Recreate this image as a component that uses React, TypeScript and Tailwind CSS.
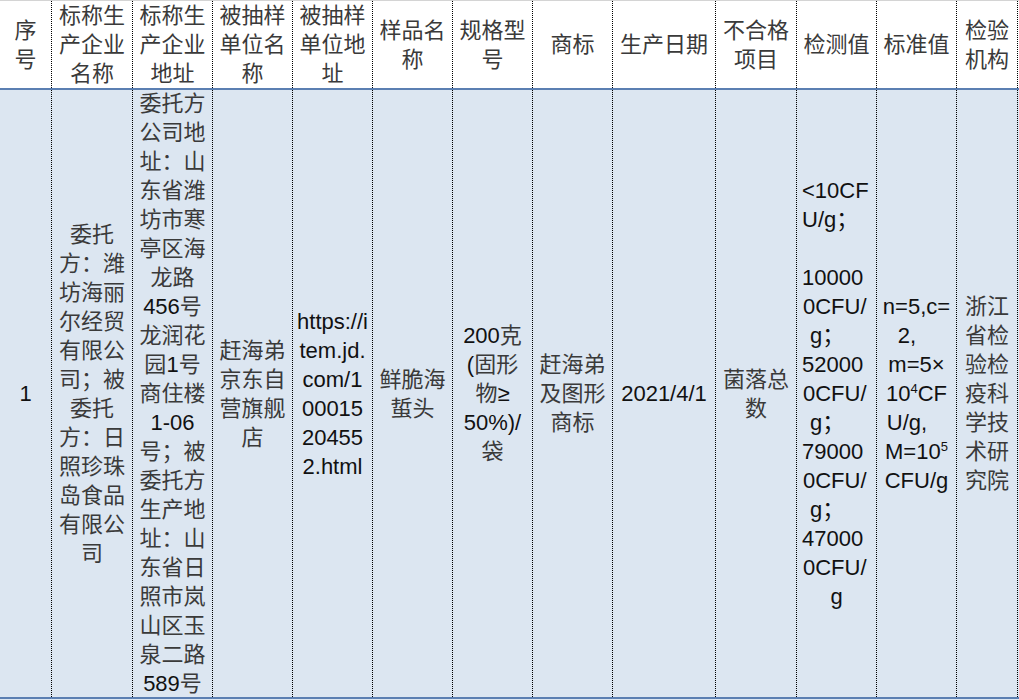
import React from "react";

type Line = { t: React.ReactNode; c?: string };

const cols = [
  "w-[52px]",
  "w-[81px]",
  "w-[80px]",
  "w-[80px]",
  "w-[80px]",
  "w-[80px]",
  "w-[80px]",
  "w-[80px]",
  "w-[103px]",
  "w-[81px]",
  "w-[80px]",
  "w-[80px]",
  "w-[61px]",
];

const cjk = (s: string): React.ReactNode => {
  const parts = s.split(/([\u3000-\u9fff\uff00-\uffef]+)/);
  return parts.map((p, i) =>
    /[\u3000-\u9fff\uff00-\uffef]/.test(p) ? (
      <span key={i} className="text-[#3a3a3a]">
        {p}
      </span>
    ) : (
      <React.Fragment key={i}>{p}</React.Fragment>
    )
  );
};

const header: string[][] = [
  ["序", "号"],
  ["标称生", "产企业", "名称"],
  ["标称生", "产企业", "地址"],
  ["被抽样", "单位名", "称"],
  ["被抽样", "单位地", "址"],
  ["样品名", "称"],
  ["规格型", "号"],
  ["商标"],
  ["生产日期"],
  ["不合格", "项目"],
  ["检测值"],
  ["标准值"],
  ["检验", "机构"],
];

const L = (arr: (string | Line)[]): Line[] =>
  arr.map((x) => (typeof x === "string" ? { t: cjk(x) } : x));

const sup = (n: string) => (
  <span className="text-[13px] leading-none align-super">{n}</span>
);

const body: Line[][] = [
  L(["1"]),
  L([
    "委托",
    "方：潍",
    "坊海丽",
    "尔经贸",
    "有限公",
    "司；被",
    "委托",
    "方：日",
    "照珍珠",
    "岛食品",
    "有限公",
    "司",
  ]),
  L([
    "委托方",
    "公司地",
    "址：山",
    "东省潍",
    "坊市寒",
    "亭区海",
    "龙路",
    "456号",
    "龙润花",
    "园1号",
    "商住楼",
    "1-06",
    "号；被",
    "委托方",
    "生产地",
    "址：山",
    "东省日",
    "照市岚",
    "山区玉",
    "泉二路",
    "589号",
  ]),
  L(["赶海弟", "京东自", "营旗舰", "店"]),
  L(["https://i", "tem.jd.", "com/1", "00015", "20455", "2.html"]),
  L(["鲜脆海", "蜇头"]),
  L(["200克", "(固形", "物≥", "50%)/", "袋"]),
  L(["赶海弟", "及图形", "商标"]),
  L(["2021/4/1"]),
  L(["菌落总", "数"]),
  [
    { t: "<10CF", c: "self-start pl-[5px]" },
    { t: "U/g；", c: "self-start pl-[5px]" },
    { t: "\u00a0", c: "self-start pl-[5px]" },
    { t: "10000", c: "self-start pl-[5px]" },
    { t: "0CFU/", c: "self-start pl-[6px]" },
    { t: "g；", c: "self-start pl-[13px]" },
    { t: "52000", c: "self-start pl-[5px]" },
    { t: "0CFU/", c: "self-start pl-[6px]" },
    { t: "g；", c: "self-start pl-[13px]" },
    { t: "79000", c: "self-start pl-[5px]" },
    { t: "0CFU/", c: "self-start pl-[6px]" },
    { t: "g；", c: "self-start pl-[13px]" },
    { t: "47000", c: "self-start pl-[5px]" },
    { t: "0CFU/", c: "self-start pl-[6px]" },
    { t: "g" },
  ],
  [
    { t: "n=5,c=" },
    { t: "2,", c: "pr-[19px]" },
    { t: "m=5×" },
    { t: <>10{sup("4")}CF</> },
    { t: "U/g,", c: "pr-[19px]" },
    { t: <>M=10{sup("5")}</> },
    { t: "CFU/g" },
  ],
  L(["浙江", "省检", "验检", "疫科", "学技", "术研", "究院"]),
];

export default function App() {
  return (
    <div
      className="w-[1019px] h-[700px] bg-white text-[22px] leading-[29px] text-[#111111] overflow-hidden"
      style={{
        fontFamily:
          '"Liberation Sans", "Noto Sans CJK SC", Arial, sans-serif',
      }}
    >
      <div className="h-px bg-[#d4d4d4]" />
      <div className="flex h-[87px]">
        {header.map((lines, i) => (
          <div
            key={i}
            className={`${cols[i]} shrink-0 flex flex-col items-center justify-center border-r border-dotted border-black`}
          >
            {lines.map((l, j) => (
              <div key={j} className="whitespace-nowrap text-center">
                {cjk(l)}
              </div>
            ))}
          </div>
        ))}
      </div>
      <div className="h-[2px] bg-[#5b7fb2]" />
      <div className="flex h-[607px] bg-[#dce6f1]">
        {body.map((lines, i) => (
          <div
            key={i}
            className={`${cols[i]} shrink-0 flex flex-col items-center justify-center border-r border-dotted border-black`}
          >
            {lines.map((l, j) => (
              <div
                key={j}
                className={`whitespace-nowrap text-center leading-[29px] ${l.c ?? ""}`}
              >
                {l.t}
              </div>
            ))}
          </div>
        ))}
      </div>
      <div className="h-[2px] bg-[#5b7fb2]" />
      <div className="h-px bg-[#dce6f1]" />
    </div>
  );
}
